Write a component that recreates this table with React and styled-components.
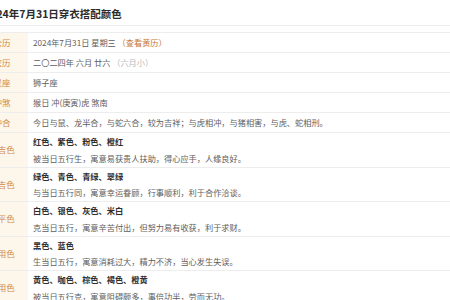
import React from "react";
import styled, { createGlobalStyle } from "styled-components";

const Global = createGlobalStyle`
  html, body { margin: 0; padding: 0; background: #fff; overflow: hidden; }
  body { font-family: "Noto Sans CJK SC", "Noto Sans", sans-serif; }
`;

const Page = styled.div`
  width: 500px;
  margin-left: -24px;
`;

const Title = styled.h1`
  margin: 0;
  height: 26px;
  box-sizing: border-box;
  padding: 0 0 0 8px;
  font-size: 10.5px;
  font-weight: 700;
  line-height: 27px;
  color: #2b2b2b;
  border-bottom: 1px solid #ededed;
`;

const Table = styled.div`
  margin-top: 6px;
  border-top: 1px solid #ededed;
`;

const Row = styled.div`
  display: grid;
  grid-template-columns: 52px 1fr;
  border-bottom: 1px solid #ededed;
`;

const Label = styled.div`
  background: #fcf7ea;
  color: #d28a49;
  font-size: 8.5px;
  display: flex;
  align-items: center;
  justify-content: center;
  line-height: ${(p) => (p.$double ? "33.5px" : "19px")};
`;

const Cell = styled.div`
  padding-left: 5px;
  font-size: 8.2px;
  color: #5e5e5e;
  line-height: ${(p) => (p.$double ? "16.75px" : "19px")};
  white-space: nowrap;
`;

const Link = styled.span`
  color: #c9773a;
`;

const Muted = styled.span`
  color: #b9b9b9;
`;

const Colors = styled.div`
  font-weight: 700;
  color: #2e2e2e;
`;

const Desc = styled.div``;

const simple = [
  {
    label: "公历",
    content: (
      <>
        2024年7月31日 星期三 <Link>（查看黄历）</Link>
      </>
    ),
  },
  {
    label: "农历",
    content: (
      <>
        二〇二四年 六月 廿六 <Muted>（六月小）</Muted>
      </>
    ),
  },
  { label: "星座", content: "狮子座" },
  { label: "冲煞", content: "猴日 冲(庚寅)虎 煞南" },
  {
    label: "冲合",
    content: "今日与鼠、龙半合，与蛇六合，较为吉祥；与虎相冲，与猪相害，与虎、蛇相刑。",
  },
];

const colorRows = [
  {
    label: "大吉色",
    colors: "红色、紫色、粉色、橙红",
    desc: "被当日五行生，寓意易获贵人扶助，得心应手，人缘良好。",
  },
  {
    label: "次吉色",
    colors: "绿色、青色、青绿、翠绿",
    desc: "与当日五行同，寓意幸运眷顾，行事顺利，利于合作洽谈。",
  },
  {
    label: "平平色",
    colors: "白色、银色、灰色、米白",
    desc: "克当日五行，寓意辛苦付出，但努力易有收获，利于求财。",
  },
  {
    label: "慎用色",
    colors: "黑色、蓝色",
    desc: "生当日五行，寓意消耗过大，精力不济，当心发生失误。",
  },
  {
    label: "忌用色",
    colors: "黄色、咖色、棕色、褐色、橙黄",
    desc: "被当日五行克，寓意阻碍颇多，事倍功半，劳而无功。",
  },
];

export default function App() {
  return (
    <>
      <Global />
      <Page>
        <Title>2024年7月31日穿衣搭配颜色</Title>
        <Table>
          {simple.map((r) => (
            <Row key={r.label}>
              <Label>{r.label}</Label>
              <Cell>{r.content}</Cell>
            </Row>
          ))}
          {colorRows.map((r) => (
            <Row key={r.label}>
              <Label $double>{r.label}</Label>
              <Cell $double>
                <Colors>{r.colors}</Colors>
                <Desc>{r.desc}</Desc>
              </Cell>
            </Row>
          ))}
        </Table>
      </Page>
    </>
  );
}
